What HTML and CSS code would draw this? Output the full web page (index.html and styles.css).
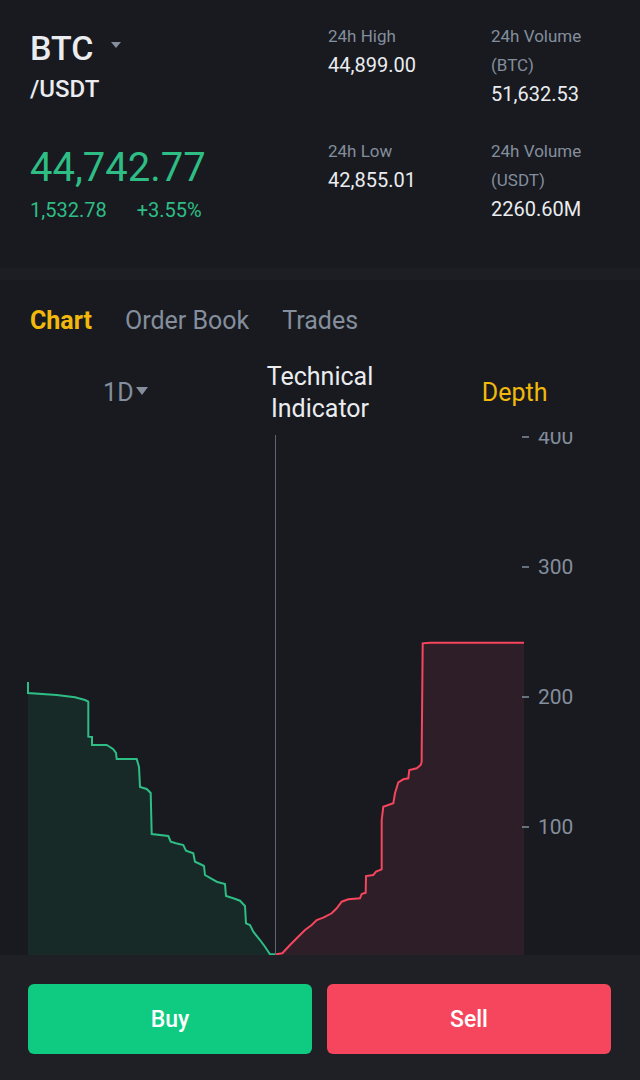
FILE: index.html
```html
<!DOCTYPE html>
<html lang="en">
  <head>
    <meta charset="UTF-8" />
    <meta name="viewport" content="width=device-width, initial-scale=1" />
    <title>BTC/USDT</title>
    <link rel="stylesheet" href="styles.css">
  </head>
  <body>
    <div class="ticker">
      <div class="ticker-main">
        <div class="pair">BTC <span class="caret"></span></div>
        <div class="quote">/USDT</div>
        <div class="price">44,742.77</div>
        <div class="change">
          <span>1,532.78</span>
          <span>+3.55%</span>
        </div>
      </div>
      <div class="stats">
        <div class="stat">
          <div class="stat-label">24h High</div>
          <div class="stat-value">44,899.00</div>
        </div>
        <div class="stat stat-wide">
          <div class="stat-label">24h Volume (BTC)</div>
          <div class="stat-value">51,632.53</div>
        </div>
        <div class="stat">
          <div class="stat-label">24h Low</div>
          <div class="stat-value">42,855.01</div>
        </div>
        <div class="stat stat-wide">
          <div class="stat-label">24h Volume (USDT)</div>
          <div class="stat-value">2260.60M</div>
        </div>
      </div>
    </div>

    <div class="divider"></div>

    <div class="tabs">
      <span class="tab active">Chart</span>
      <span class="tab">Order Book</span>
      <span class="tab">Trades</span>
    </div>

    <div class="subtabs">
      <span class="subtab">1D<span class="caret-sm"></span></span>
      <span class="subtab light">Technical<br>Indicator</span>
      <span class="subtab active">Depth</span>
    </div>

    <svg class="depth" width="640" height="523" viewBox="0 432 640 523">
      <!-- bids -->
      <path fill="#18302a" fill-opacity="0.75" d="M28,682 L28,693 L56.7,695 L75,697.3 L85,700 L88.3,701.7 L88.3,736.7 L92,737 L92,745 L106.7,745 L110,747 L113,749 L116,753 L116.7,759 L136.7,759 L139,767 L140,787 L146.7,789 L150.7,793 L151.7,834 L168.3,836 L170.7,841.7 L176,843.3 L183.3,845 L186,850.7 L193.3,853.3 L195,861.7 L200,864 L204,866 L205,875 L216.7,881.7 L225,884 L226,896 L233.3,898.3 L240,900.7 L245,906 L246,923.3 L250,925 L253.3,931.7 L260,940 L265,946.7 L270,954.3 L275,955 L28,955 Z"/>
      <path fill="none" stroke="#2ebd85" stroke-width="2" d="M28,682 L28,693 L56.7,695 L75,697.3 L85,700 L88.3,701.7 L88.3,736.7 L92,737 L92,745 L106.7,745 L110,747 L113,749 L116,753 L116.7,759 L136.7,759 L139,767 L140,787 L146.7,789 L150.7,793 L151.7,834 L168.3,836 L170.7,841.7 L176,843.3 L183.3,845 L186,850.7 L193.3,853.3 L195,861.7 L200,864 L204,866 L205,875 L216.7,881.7 L225,884 L226,896 L233.3,898.3 L240,900.7 L245,906 L246,923.3 L250,925 L253.3,931.7 L260,940 L265,946.7 L270,954.3 L276,954.3"/>
      <!-- asks -->
      <path fill="#35202a" fill-opacity="0.75" d="M275,955 L275,954.3 L282.3,953.3 L290,945 L296.7,938.3 L305,930 L311.7,925 L316.7,920 L323.3,917.7 L331.7,913.3 L336.7,908.3 L341.7,901.7 L348.3,899.3 L360,898.3 L361.7,894 L365.7,892.7 L366,876 L373.3,875 L376,871.7 L381.7,869.3 L381.7,820 L383.3,806.7 L393.3,803.3 L395,793.3 L398.3,782.3 L403.3,779.3 L408.3,778.3 L409.3,770 L416.7,768.3 L420.7,765 L421.7,761.7 L421.7,750 L422.7,643.3 L430,642.7 L524,642.7 L524,955 Z"/>
      <path fill="none" stroke="#f6465d" stroke-width="2" d="M276,954.3 L282.3,953.3 L290,945 L296.7,938.3 L305,930 L311.7,925 L316.7,920 L323.3,917.7 L331.7,913.3 L336.7,908.3 L341.7,901.7 L348.3,899.3 L360,898.3 L361.7,894 L365.7,892.7 L366,876 L373.3,875 L376,871.7 L381.7,869.3 L381.7,820 L383.3,806.7 L393.3,803.3 L395,793.3 L398.3,782.3 L403.3,779.3 L408.3,778.3 L409.3,770 L416.7,768.3 L420.7,765 L421.7,761.7 L421.7,750 L422.7,643.3 L430,642.7 L524,642.7"/>
      <line x1="275.5" y1="435" x2="275.5" y2="955" stroke="#5e6673" stroke-width="1"/>
      <!-- axis -->
      <g class="axis">
        <line x1="522" y1="437" x2="529" y2="437"/>
        <line x1="522" y1="567" x2="529" y2="567"/>
        <line x1="522" y1="697" x2="529" y2="697"/>
        <line x1="522" y1="827" x2="529" y2="827"/>
        <text x="538" y="444">400</text>
        <text x="538" y="574">300</text>
        <text x="538" y="704">200</text>
        <text x="538" y="834">100</text>
      </g>
    </svg>

    <div class="actions">
      <button class="btn buy">Buy</button>
      <button class="btn sell">Sell</button>
    </div>
  </body>
</html>
```

FILE: styles.css
```css
body {
  margin: 0;
  background-color: #181a20;
  font-family: Roboto, "Liberation Sans", sans-serif;
  color: #eaecef;
  width: 640px;
  height: 1080px;
  overflow: hidden;
}
.ticker {
  display: flex;
  height: 246px;
  padding: 22px 0 0 30px;
}
.ticker-main {
  width: 298px;
  padding-top: 6px;
}
.pair {
  font-size: 34px;
  font-weight: 500;
  line-height: 40px;
  display: flex;
  align-items: center;
}
.caret {
  display: inline-block;
  margin-left: 18px;
  margin-top: -6px;
  border-left: 5px solid transparent;
  border-right: 5px solid transparent;
  border-top: 6px solid #848e9c;
}
.quote {
  font-size: 24px;
  font-weight: 500;
  line-height: 34px;
  margin-top: 4px;
}
.price {
  font-size: 40px;
  line-height: 50px;
  color: #2ebd85;
  margin-top: 37px;
}
.change {
  font-size: 20px;
  line-height: 28px;
  color: #2ebd85;
  margin-top: 3px;
  display: flex;
  gap: 30px;
}
.stats {
  display: grid;
  grid-template-columns: 163px 121px;
  row-gap: 28px;
  align-content: start;
}
.stat-label {
  font-size: 17px;
  line-height: 29px;
  color: #848e9c;
}
.stat-value {
  font-size: 20px;
  line-height: 29px;
  color: #eaecef;
}
.divider {
  height: 12px;
  background-color: #1c1e24;
}
.tabs {
  display: flex;
  gap: 33px;
  padding: 25px 30px 0;
  font-size: 25px;
  line-height: 32px;
}
.tab {
  color: #848e9c;
}
.tab.active {
  color: #f0b90b;
  font-weight: bold;
}
.subtabs {
  display: grid;
  grid-template-columns: repeat(3, 1fr);
  align-items: center;
  margin: 24px 28px 0;
  font-size: 25px;
  line-height: 32px;
  text-align: center;
}
.subtab {
  color: #848e9c;
}
.subtab.light {
  color: #eaecef;
}
.subtab.active {
  color: #f0b90b;
}
.caret-sm {
  display: inline-block;
  vertical-align: middle;
  margin-left: 2px;
  margin-top: -6px;
  border-left: 6px solid transparent;
  border-right: 6px solid transparent;
  border-top: 8px solid #848e9c;
}
.depth {
  display: block;
  margin-top: 7px;
}
.axis line {
  stroke: #848e9c;
  stroke-width: 1.5;
}
.axis text {
  fill: #848e9c;
  font-family: Roboto, "Liberation Sans", sans-serif;
  font-size: 21px;
}
.actions {
  display: grid;
  grid-template-columns: 1fr 1fr;
  gap: 15px;
  height: 125px;
  box-sizing: border-box;
  padding: 29px 29px 0 28px;
  background-color: #1e2026;
}
.btn {
  height: 70px;
  border: none;
  border-radius: 6px;
  color: #fff;
  font-family: Roboto, "Liberation Sans", sans-serif;
  font-size: 23px;
  font-weight: 500;
}
.buy {
  background-color: #0ecb81;
}
.sell {
  background-color: #f6465d;
}
```
